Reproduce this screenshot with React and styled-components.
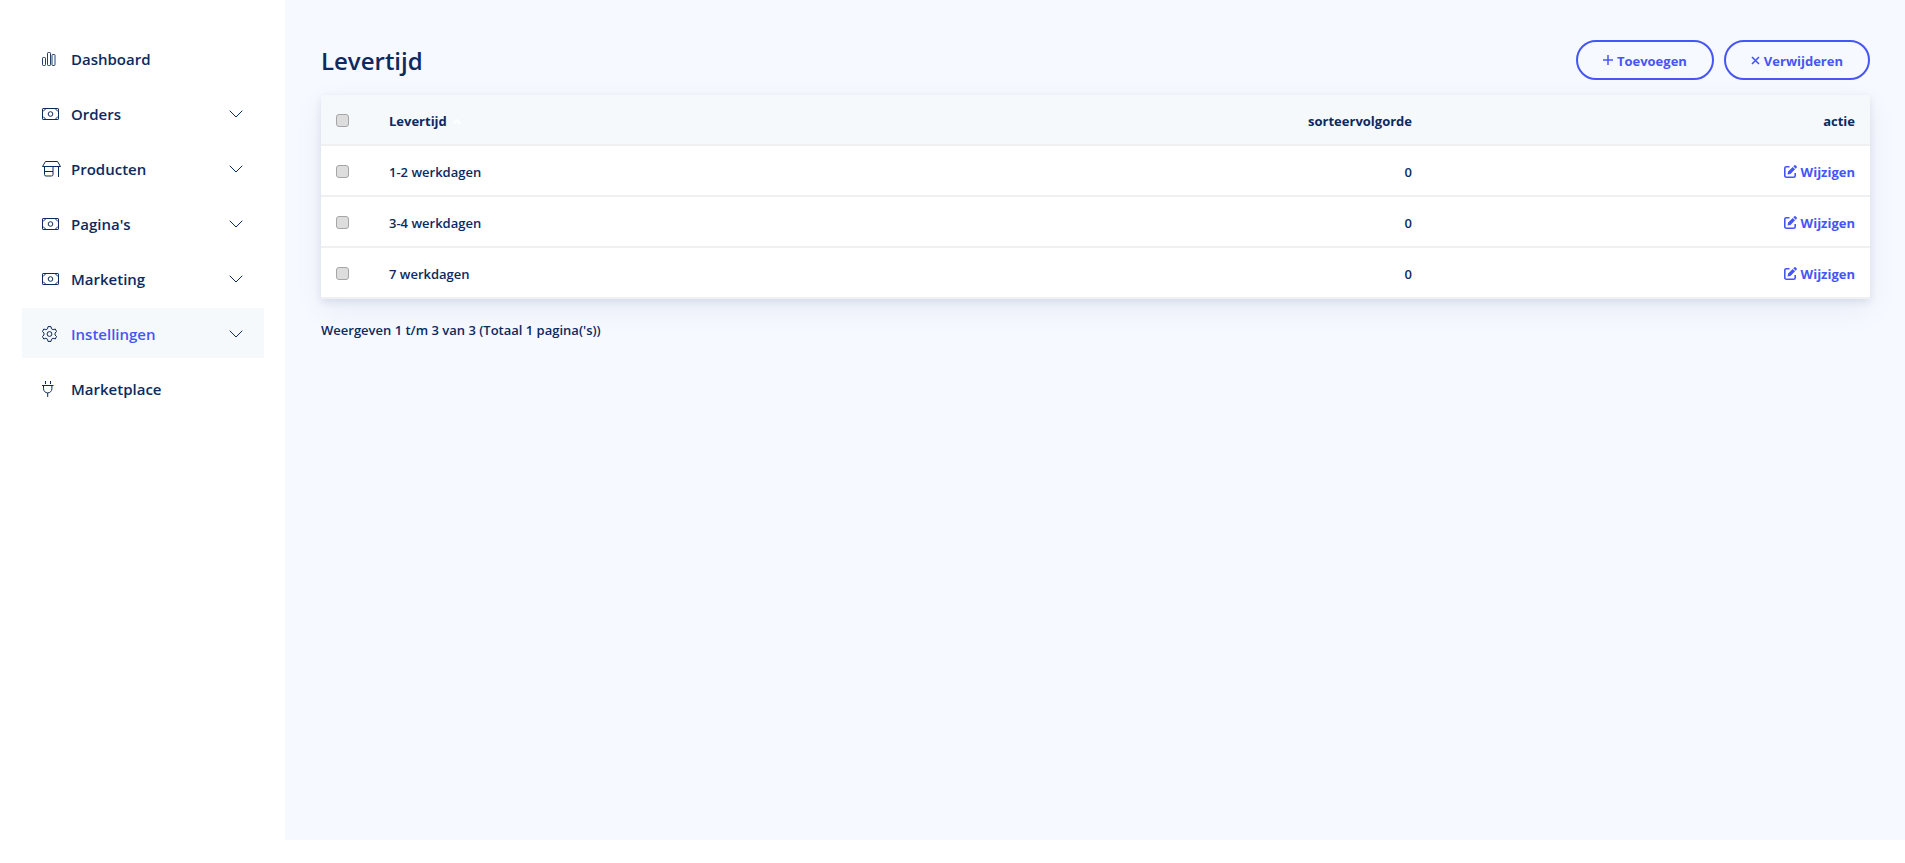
import styled, { createGlobalStyle } from 'styled-components';

const navy = '#0c2a5f';
const blue = '#4655f5';

const GlobalStyle = createGlobalStyle`
    * {
        box-sizing: border-box;
    }

    body {
        margin: 0;
        background: #fff;
        color: ${navy};
        font-family: "Open Sans", "Noto Sans", sans-serif;
        font-size: 13px;
        font-weight: 600;
        line-height: 20px;
    }
`

const Layout = styled.div`
    display: flex;
    align-items: flex-start;
`

const Sidebar = styled.nav`
    flex: 0 0 285px;
    padding: 33px 21px 0 22px;
`

const Menu = styled.ul`
    display: flex;
    flex-direction: column;
    gap: 5px;
    margin: 0;
    padding: 0;
    list-style: none;
`

const MenuLink = styled.a`
    display: flex;
    align-items: center;
    height: 50px;
    padding: 2px 21px 0 20px;
    background: ${props => props.$active ? '#f5f9fc' : 'transparent'};
    color: ${props => props.$active ? blue : navy};
    font-size: 15px;
    text-decoration: none;

    &:hover {
        background: #f5f9fc;
    }
`

const MenuIcon = styled.span`
    display: flex;
    flex: 0 0 29px;
    color: ${navy};
`

const Chevron = styled.svg`
    margin-left: auto;
    color: ${navy};
`

const Content = styled.main`
    flex: 1;
    min-width: 0;
    min-height: calc(100vh - 23px);
    padding: 40px 35px 35px 36px;
    background: #f6f9ff;
`

const TopBar = styled.header`
    display: flex;
    align-items: center;
    justify-content: space-between;
    margin-bottom: 15px;
`

const Title = styled.h1`
    margin: 0;
    padding-top: 2px;
    font-size: 24px;
    font-weight: 600;
    line-height: 38px;
`

const Actions = styled.div`
    display: flex;
    gap: 10px;
`

const Button = styled.button`
    display: flex;
    align-items: center;
    gap: 4px;
    height: 40px;
    padding: 2px 25px 0;
    border: 2px solid ${blue};
    border-radius: 20px;
    background: transparent;
    color: ${blue};
    font: inherit;
    font-weight: 700;
    cursor: pointer;

    svg {
        margin-bottom: 2px;
    }
`

const Table = styled.table`
    width: 100%;
    border-spacing: 0;
    table-layout: fixed;
    background: #fff;
    box-shadow: 0 10px 30px rgba(12, 42, 95, 0.06), 0 3px 8px rgba(12, 42, 95, 0.1);
`

const Col = styled.col`
    width: ${props => props.$width};
`

const Cell = styled.td`
    height: 51px;
    padding: 2px 15px 0;
    border-bottom: 2px solid #eef0f2;
    text-align: ${props => props.$right ? 'right' : 'left'};
`

const HeadCell = styled(Cell)`
    background: #f5f9fc;
    font-weight: 700;
`

const Checkbox = styled.input`
    display: block;
    appearance: none;
    width: 13px;
    height: 13px;
    margin: 0;
    border: 1px solid #a6a6a6;
    border-radius: 3px;
    background: #ddd;

    &:checked {
        background: ${blue};
    }
`

const SortIcon = styled.svg`
    margin-left: 3px;
    vertical-align: 2px;
`

const EditLink = styled.a`
    display: flex;
    align-items: center;
    justify-content: flex-end;
    gap: 4px;
    color: ${blue};
    font-weight: 700;
    text-decoration: none;
`

const Summary = styled.p`
    margin: 21px 0 0;
`

function ChartIcon () {
    return (
        <svg width="15" height="14" viewBox="0 0 15 14" fill="none" stroke="currentColor" strokeWidth=".9">
            <rect x=".5" y="5.5" width="3" height="8" rx=".8" />
            <rect x="5.5" y=".5" width="3" height="13" rx=".8" />
            <rect x="10" y="2.5" width="3" height="11" rx=".8" />
        </svg>
    );
}

function MoneyIcon () {
    return (
        <svg width="18" height="12" viewBox="0 0 18 12" fill="none" stroke="currentColor">
            <rect x=".5" y=".5" width="16" height="11" rx=".6" />
            <circle cx="8.5" cy="6" r="2.3" />
            <path d="M1 3.5 3.5 1M13.5 1 16 3.500M1 8.500 3.500 11M13.500 11 16 8.500" />
        </svg>
    );
}

function StoreIcon () {
    return (
        <svg width="20" height="16" viewBox="0 0 20 16" fill="none" stroke="currentColor" strokeLinejoin="round">
            <path d="M3.5 .5h12l3 5H.5z" />
            <path d="M2.5 5.500v8A1.500 1.500 0 0 0 4 15h5.500a1.500 1.500 0 0 0 1.500-1.500v-8M2.500 10.500H11M16.500 5.500V16" />
        </svg>
    );
}

function GearIcon () {
    return (
        <svg width="15" height="16" viewBox="0 0 15 16" fill="none" stroke="currentColor" strokeLinejoin="round">
            <path d="M6 .6h3l.5 2.200 1.600.9 2.100-.7 1.400 2.500-1.600 1.500v2l1.600 1.500-1.400 2.500-2.100-.7-1.600.9-.5 2.200H6l-.5-2.200-1.600-.9-2.100.7L.4 10.500 2 9V7L.4 5.500 1.800 3l2.100.7 1.600-.9z" />
            <circle cx="7.5" cy="8" r="2.4" />
        </svg>
    );
}

function PlugIcon () {
    return (
        <svg width="12" height="16" viewBox="0 0 12 16" fill="none" stroke="currentColor">
            <path d="M3.5 0v3M8.500 0v3M0 4.500h11.500M1.500 4.500v3.200a4.200 4.200 0 0 0 8.400 0V4.500M5.700 12v4" />
        </svg>
    );
}

function EditIcon () {
    return (
        <svg width="13" height="13" viewBox="0 0 13 13" fill="none" stroke="currentColor" strokeWidth="1.6">
            <path d="M5.500 1.800H2.300A1.500 1.500 0 0 0 .8 3.300v7.400a1.500 1.500 0 0 0 1.500 1.500h7.400a1.500 1.500 0 0 0 1.500-1.500V8" />
            <path d="m3.500 9.500.6-3L8.700 1.900l2.400 2.400L6.500 8.900zM9.300 1.300l.7-.7a1.300 1.300 0 0 1 1.900 0l.5.5a1.300 1.300 0 0 1 0 1.900l-.7.7z" fill="currentColor" stroke="none" />
        </svg>
    );
}

const menu = [
    { label: 'Dashboard', icon: ChartIcon },
    { label: 'Orders', icon: MoneyIcon, sub: true },
    { label: 'Producten', icon: StoreIcon, sub: true },
    { label: "Pagina's", icon: MoneyIcon, sub: true },
    { label: 'Marketing', icon: MoneyIcon, sub: true },
    { label: 'Instellingen', icon: GearIcon, sub: true, active: true },
    { label: 'Marketplace', icon: PlugIcon },
];

const rows = [
    { name: '1-2 werkdagen', order: 0 },
    { name: '3-4 werkdagen', order: 0 },
    { name: '7 werkdagen', order: 0 },
];

function App () {
    return (
        <>
            <GlobalStyle />
            <Layout>
                <Sidebar>
                    <Menu>
                        {menu.map(({ label, icon: Icon, sub, active }) => (
                            <li key={label}>
                                <MenuLink href="#" $active={active}>
                                    <MenuIcon><Icon /></MenuIcon>
                                    {label}
                                    {sub && (
                                        <Chevron width="14" height="8" viewBox="0 0 14 8" fill="none" stroke="currentColor">
                                            <path d="M.7 .7 7 7 13.300 .7" />
                                        </Chevron>
                                    )}
                                </MenuLink>
                            </li>
                        ))}
                    </Menu>
                </Sidebar>
                <Content>
                    <TopBar>
                        <Title>Levertijd</Title>
                        <Actions>
                            <Button type="button">
                                <svg width="10" height="10" viewBox="0 0 10 10" fill="none" stroke="currentColor" strokeWidth="1.5">
                                    <path d="M5 0v10M0 5h10" />
                                </svg>
                                Toevoegen
                            </Button>
                            <Button type="button">
                                <svg width="9" height="9" viewBox="0 0 9 9" fill="none" stroke="currentColor" strokeWidth="1.6">
                                    <path d="m1 1 7 7M8 1 1 8" />
                                </svg>
                                Verwijderen
                            </Button>
                        </Actions>
                    </TopBar>
                    <Table>
                        <colgroup>
                            <Col $width="53px" />
                            <Col />
                            <Col $width="29%" />
                            <Col $width="28.6%" />
                        </colgroup>
                        <thead>
                            <tr>
                                <HeadCell as="th"><Checkbox type="checkbox" aria-label="Alles selecteren" /></HeadCell>
                                <HeadCell as="th">
                                    Levertijd{' '}
                                    <SortIcon width="8" height="5" viewBox="0 0 8 5" fill="none" stroke="#fff" strokeWidth="2">
                                        <path d="M.7 4.500 4 1.200l3.300 3.300" />
                                    </SortIcon>
                                </HeadCell>
                                <HeadCell as="th" $right>sorteervolgorde</HeadCell>
                                <HeadCell as="th" $right>actie</HeadCell>
                            </tr>
                        </thead>
                        <tbody>
                            {rows.map(row => (
                                <tr key={row.name}>
                                    <Cell><Checkbox type="checkbox" aria-label={row.name} /></Cell>
                                    <Cell>{row.name}</Cell>
                                    <Cell $right>{row.order}</Cell>
                                    <Cell $right><EditLink href="#"><EditIcon />Wijzigen</EditLink></Cell>
                                </tr>
                            ))}
                        </tbody>
                    </Table>
                    <Summary>Weergeven 1 t/m 3 van 3 (Totaal 1 pagina('s))</Summary>
                </Content>
            </Layout>
        </>
    );
}

export default App;
